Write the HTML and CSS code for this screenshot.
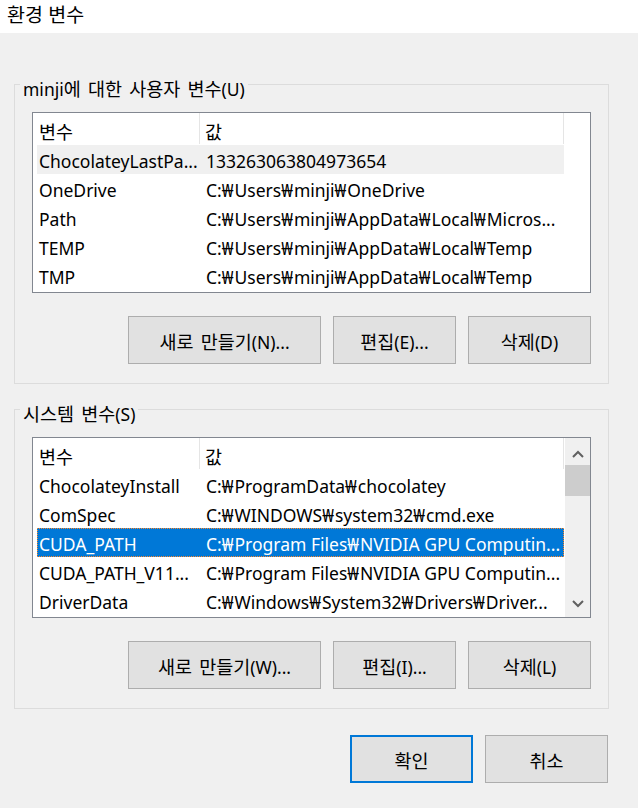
FILE: index.html
```html
<!DOCTYPE html>
<html lang="ko">
<head>
<meta charset="utf-8">
<title>환경 변수</title>
<link rel="stylesheet" href="styles.css">
</head>
<body>
<div class="titlebar"><span class="ko">환경 변수</span></div>
<div class="dialog">
  <section class="group">
    <div class="group-label">minji<span class="ko">에 대한 사용자 변수</span>(U)</div>
    <div class="list">
      <div class="list-main">
        <div class="list-head">
          <div class="cell c1"><span class="ko">변수</span></div>
          <div class="cell c2"><span class="ko">값</span></div>
        </div>
        <div class="row inactive"><div class="cell c1">ChocolateyLastPa...</div><div class="cell c2">133263063804973654</div></div>
        <div class="row"><div class="cell c1">OneDrive</div><div class="cell c2">C:<span class="w">₩</span>Users<span class="w">₩</span>minji<span class="w">₩</span>OneDrive</div></div>
        <div class="row"><div class="cell c1">Path</div><div class="cell c2">C:<span class="w">₩</span>Users<span class="w">₩</span>minji<span class="w">₩</span>AppData<span class="w">₩</span>Local<span class="w">₩</span>Micros...</div></div>
        <div class="row"><div class="cell c1">TEMP</div><div class="cell c2">C:<span class="w">₩</span>Users<span class="w">₩</span>minji<span class="w">₩</span>AppData<span class="w">₩</span>Local<span class="w">₩</span>Temp</div></div>
        <div class="row"><div class="cell c1">TMP</div><div class="cell c2">C:<span class="w">₩</span>Users<span class="w">₩</span>minji<span class="w">₩</span>AppData<span class="w">₩</span>Local<span class="w">₩</span>Temp</div></div>
      </div>
    </div>
    <div class="btnrow">
      <button class="btn wide"><span class="ko">새로 만들기</span>(N)...</button>
      <button class="btn"><span class="ko">편집</span>(E)...</button>
      <button class="btn"><span class="ko">삭제</span>(D)</button>
    </div>
  </section>

  <section class="group">
    <div class="group-label"><span class="ko">시스템 변수</span>(S)</div>
    <div class="list">
      <div class="list-main">
        <div class="list-head">
          <div class="cell c1"><span class="ko">변수</span></div>
          <div class="cell c2"><span class="ko">값</span></div>
        </div>
        <div class="row"><div class="cell c1">ChocolateyInstall</div><div class="cell c2">C:<span class="w">₩</span>ProgramData<span class="w">₩</span>chocolatey</div></div>
        <div class="row"><div class="cell c1">ComSpec</div><div class="cell c2">C:<span class="w">₩</span>WINDOWS<span class="w">₩</span>system32<span class="w">₩</span>cmd.exe</div></div>
        <div class="row selected"><div class="cell c1">CUDA_PATH</div><div class="cell c2">C:<span class="w">₩</span>Program Files<span class="w">₩</span>NVIDIA GPU Computin...</div></div>
        <div class="row"><div class="cell c1">CUDA_PATH_V11...</div><div class="cell c2">C:<span class="w">₩</span>Program Files<span class="w">₩</span>NVIDIA GPU Computin...</div></div>
        <div class="row"><div class="cell c1">DriverData</div><div class="cell c2">C:<span class="w">₩</span>Windows<span class="w">₩</span>System32<span class="w">₩</span>Drivers<span class="w">₩</span>Driver...</div></div>
      </div>
      <div class="scrollbar">
        <div class="sb-btn sb-up"><svg width="12" height="8" viewBox="0 0 12 8"><path d="M1 7 L6 2 L11 7" stroke="#606060" stroke-width="2" fill="none"/></svg></div>
        <div class="sb-thumb"></div>
        <div class="sb-track"></div>
        <div class="sb-btn sb-down"><svg width="12" height="8" viewBox="0 0 12 8"><path d="M1 1 L6 6 L11 1" stroke="#606060" stroke-width="2" fill="none"/></svg></div>
      </div>
    </div>
    <div class="btnrow">
      <button class="btn wide"><span class="ko">새로 만들기</span>(W)...</button>
      <button class="btn"><span class="ko">편집</span>(I)...</button>
      <button class="btn"><span class="ko">삭제</span>(L)</button>
    </div>
  </section>

  <div class="dlgbtns">
    <button class="btn default"><span class="ko">확인</span></button>
    <button class="btn"><span class="ko">취소</span></button>
  </div>
</div>
</body>
</html>
```

FILE: styles.css
```css
* { box-sizing: border-box; }
html, body { margin: 0; padding: 0; }
body {
  width: 638px;
  height: 808px;
  overflow: hidden;
  background: #f0f0f0;
  color: #000;
  font-family: "Noto Sans", "Noto Sans CJK KR", sans-serif;
  font-size: 17.5px;
}
.ko {
  font-family: "Noto Sans CJK KR", "Noto Sans", sans-serif;
  font-size: 18.5px;
  word-spacing: 2px;
}
.w { margin-right: 1px; }
.titlebar {
  height: 33px;
  background: #fff;
  line-height: 27px;
  padding-left: 7px;
}
.titlebar .ko { font-size: 19.5px; word-spacing: 0; }
.dialog {
  padding: 51px 29px 0 14px;
}
.group {
  border: 1px solid #dcdcdc;
  padding: 0 17px 19px 17px;
}
.group + .group { margin-top: 25px; }
.group-label {
  width: max-content;
  height: 22px;
  line-height: 22px;
  margin: -8px 0 0 -12px;
  padding: 0 3px;
  background: #f0f0f0;
}
.list {
  margin-top: 13px;
  height: 181px;
  border: 1px solid #828790;
  background: #fff;
  display: flex;
}
.list-main {
  flex: 1;
  padding-left: 4px;
  overflow: hidden;
}
.list-head {
  display: flex;
  height: 32px;
  line-height: 28px;
  padding-top: 4px;
}
.cell {
  white-space: nowrap;
  overflow: hidden;
}
.c1 { width: 162px; padding-left: 2px; }
.c2 { width: 365px; padding-left: 7px; }
.list-head .c1 { padding-left: 2px; }
.list-head .c2 {
  margin-top: -4px;
  padding-top: 4px;
  height: 31px;
  padding-left: 5px;
  border-left: 1px solid #e5e5e5;
  border-right: 1px solid #e5e5e5;
}
.row {
  display: flex;
  width: 527px;
  height: 29px;
  line-height: 25px;
  padding-top: 4px;
}
.row.inactive { background: #f0f0f0; }
.row.selected {
  background: #0078d7;
  color: #fff;
  outline: 1px dotted #ff8728;
  outline-offset: -1px;
}
.scrollbar {
  width: 25px;
  background: #f0f0f0;
  display: flex;
  flex-direction: column;
}
.sb-btn {
  height: 27px;
  display: flex;
  align-items: center;
  justify-content: center;
}
.sb-up { padding-top: 4px; }
.sb-thumb { height: 31px; background: #cdcdcd; }
.sb-track { flex: 1; }
.btnrow {
  display: flex;
  justify-content: flex-end;
  gap: 12px;
  margin-top: 23px;
}
.btn {
  width: 123px;
  height: 48px;
  border: 1px solid #adadad;
  background: #e1e1e1;
  font: inherit;
  color: #000;
  padding: 3px 0 0 0;
  margin: 0;
  line-height: 24px;
  text-align: center;
}
.btn.wide { width: 193px; }
.btn.default { border: 2px solid #0078d7; }
.dlgbtns {
  display: flex;
  justify-content: flex-end;
  gap: 12px;
  margin-top: 26px;
  padding-right: 1px;
}
```
